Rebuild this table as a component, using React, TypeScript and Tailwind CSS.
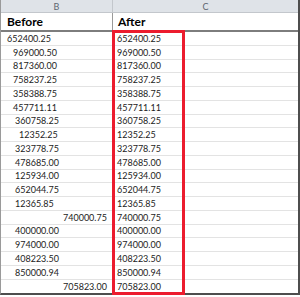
const rows: { before: string; pad: string; after: string }[] = [
  { before: "652400.25", pad: "pl-[6px]", after: "652400.25" },
  { before: "969000.50", pad: "pl-[12px]", after: "969000.50" },
  { before: "817360.00", pad: "pl-[12px]", after: "817360.00" },
  { before: "758237.25", pad: "pl-[12px]", after: "758237.25" },
  { before: "358388.75", pad: "pl-[12px]", after: "358388.75" },
  { before: "457711.11", pad: "pl-[12px]", after: "457711.11" },
  { before: "360758.25", pad: "pl-[14px]", after: "360758.25" },
  { before: "12352.25", pad: "pl-[18px]", after: "12352.25" },
  { before: "323778.75", pad: "pl-[14px]", after: "323778.75" },
  { before: "478685.00", pad: "pl-[14px]", after: "478685.00" },
  { before: "125934.00", pad: "pl-[14px]", after: "125934.00" },
  { before: "652044.75", pad: "pl-[14px]", after: "652044.75" },
  { before: "12365.85", pad: "pl-[14px]", after: "12365.85" },
  { before: "740000.75", pad: "pl-[62px]", after: "740000.75" },
  { before: "400000.00", pad: "pl-[14px]", after: "400000.00" },
  { before: "974000.00", pad: "pl-[14px]", after: "974000.00" },
  { before: "408223.50", pad: "pl-[14px]", after: "408223.50" },
  { before: "850000.94", pad: "pl-[14px]", after: "850000.94" },
  { before: "705823.00", pad: "pl-[62px]", after: "705823.00" },
];

export default function App() {
  return (
    <div
      className="relative h-[297px] w-[300px] overflow-hidden bg-white text-[#1c1c1c]"
      style={{ fontFamily: "Lato, 'Liberation Sans', sans-serif" }}
    >
      <div className="w-[300px] border-r-2 border-b-2 border-l border-r-[#4d4d4d] border-b-[#4d4d4d] border-l-[#9a9a9a]">
        {/* Column letters */}
        <div className="grid h-[13px] grid-cols-[112px_1fr] border-b border-[#c3c7cc] bg-[#dfe3e8] text-[9px] text-[#5e6670]">
          <div className="flex items-center justify-center border-r border-[#c3c7cc]">B</div>
          <div className="flex items-center justify-center">C</div>
        </div>

        {/* Titles */}
        <div className="grid h-[19px] grid-cols-[112px_1fr] border-b-2 border-[#7d7d7d] text-[12px] font-bold text-black">
          <div className="flex items-center border-r border-[#9a9a9a] pl-[6px]">Before</div>
          <div className="flex items-center pl-[5px]">After</div>
        </div>

        {/* Values */}
        {rows.map((r, i) => (
          <div
            key={i}
            className="grid h-[13.75px] grid-cols-[112px_1fr] border-b border-[#e3e3e3] text-[9px] leading-none last:border-b-0"
          >
            <div className={`flex items-center border-r border-[#d4d4d4] ${r.pad}`}>{r.before}</div>
            <div className="flex items-center pl-[4px]">{r.after}</div>
          </div>
        ))}
      </div>

      {/* Red highlight around the After values */}
      <div className="absolute left-[112px] top-[30px] h-[265px] w-[73px] border-[3px] border-[#ec1c2e]" />
    </div>
  );
}
